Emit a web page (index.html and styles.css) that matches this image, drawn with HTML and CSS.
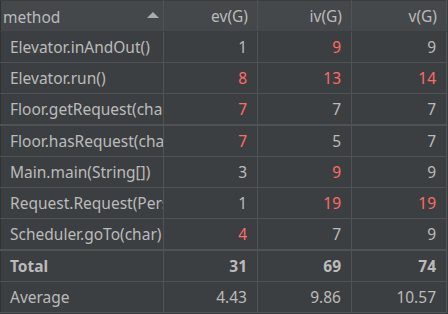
FILE: index.html
```html
<!DOCTYPE html>
<html>
<head>
<meta charset="utf-8">
<link rel="stylesheet" href="styles.css">
</head>
<body>
<div class="frame">
<table class="grid">
  <colgroup>
    <col class="c-method"><col class="c-num"><col class="c-num"><col class="c-num3">
  </colgroup>
  <thead>
    <tr>
      <th class="h-method"><span class="h-label">method</span><span class="sort"></span></th>
      <th>ev(G)</th>
      <th>iv(G)</th>
      <th>v(G)</th>
    </tr>
  </thead>
  <tbody>
    <tr><td class="name">Elevator.inAndOut()</td><td>1</td><td class="bad">9</td><td>9</td></tr>
    <tr><td class="name">Elevator.run()</td><td class="bad">8</td><td class="bad">13</td><td class="bad">14</td></tr>
    <tr><td class="name">Floor.getRequest(char)</td><td class="bad">7</td><td>7</td><td>7</td></tr>
    <tr class="thick"><td class="name">Floor.hasRequest(char)</td><td class="bad">7</td><td>5</td><td>7</td></tr>
    <tr><td class="name">Main.main(String[])</td><td>3</td><td class="bad">9</td><td>9</td></tr>
    <tr><td class="name">Request.Request(PersonRequest)</td><td>1</td><td class="bad">19</td><td class="bad">19</td></tr>
    <tr><td class="name">Scheduler.goTo(char)</td><td class="bad">4</td><td>7</td><td>9</td></tr>
    <tr class="total thick"><td class="name">Total</td><td>31</td><td>69</td><td>74</td></tr>
    <tr><td class="name">Average</td><td>4.43</td><td>9.86</td><td>10.57</td></tr>
  </tbody>
</table>
</div>
</body>
</html>
```
FILE: styles.css
```css
html, body {
  margin: 0;
  padding: 0;
  background: #3c3f41;
}
.frame {
  width: 448px;
  height: 314px;
  overflow: hidden;
  background: #3c3f41;
}
.grid {
  border-collapse: collapse;
  table-layout: fixed;
  width: 446px;
  font-family: "Noto Sans", "Open Sans", sans-serif;
  font-size: 15.5px;
  color: #bbbbbb;
}
.c-method { width: 163px; }
.c-num { width: 94px; }
.c-num3 { width: 95px; }
th, td {
  border: 1px solid #505355;
  padding: 0 10px 0 0;
  text-align: right;
  white-space: nowrap;
  overflow: hidden;
}
th {
  height: 30px;
  background: #45484a;
  font-weight: normal;
  border-top: 1px solid #3a3c3e;
  border-bottom: 1px solid #3c3f41;
  padding-right: 9px;
}
td {
  height: 30px;
}
th:first-child, td:first-child { border-left: 1px solid #2f3133; }
.h-method {
  text-align: left;
  padding: 0 4px 0 2px;
}
.h-method .h-label {
  display: inline-block;
  vertical-align: middle;
}
.sort {
  float: right;
  margin-top: 8px;
  width: 0;
  height: 0;
  border-left: 6px solid transparent;
  border-right: 6px solid transparent;
  border-bottom: 6px solid #a9abad;
}
td.name {
  text-align: left;
  padding: 0 0 0 9px;
  text-overflow: clip;
}
td.bad { color: #ff6b68; }
tr.thick td { border-top-width: 2px; }
tr.total td { font-weight: bold; }
```
